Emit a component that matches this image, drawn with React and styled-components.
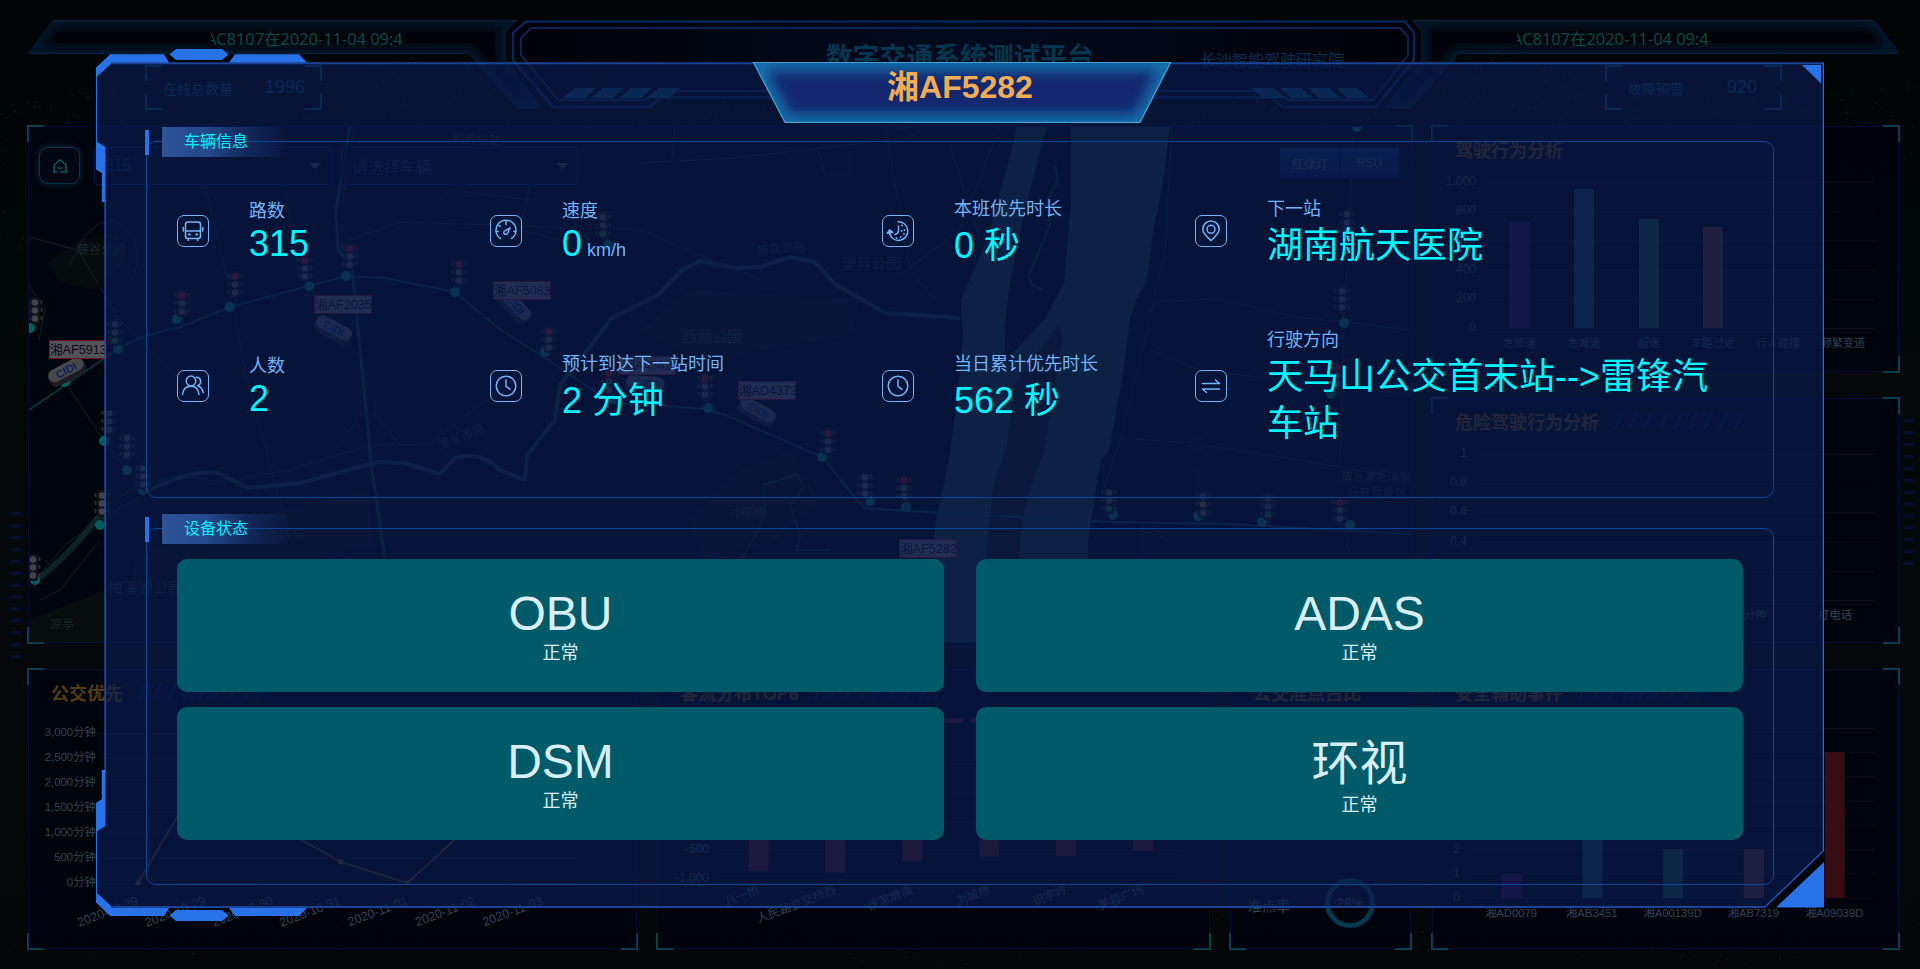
import React from "react";
import styled, { createGlobalStyle } from "styled-components";

const GlobalStyle = createGlobalStyle`
  * { box-sizing: border-box; }
  body {
    margin: 0;
    background: #020606;
    font-family: "Liberation Sans", "Noto Sans CJK SC", sans-serif;
  }
`;

const Screen = styled.div`
  position: relative;
  width: 1920px;
  height: 969px;
  overflow: hidden;
  background: linear-gradient(#010505 0%, #020707 30%, #05080a 62%, #040607 100%);
`;

const Backdrop = styled.svg`
  position: absolute;
  inset: 0;
`;

/* ---------- dashboard header ---------- */

const Header = styled.header`
  position: relative;
  height: 125px;
  display: grid;
  grid-template-columns: 505px 910px 505px;
`;

const HeaderArt = styled.svg`
  position: absolute;
  inset: 0;
`;

const HeaderSide = styled.div`
  position: relative;
  display: flex;
  flex-direction: column;
  padding: 28px 0 0 ${(p) => (p.$right ? 102 : 145)}px;
`;

const Ticker = styled.div`
  width: 192px;
  height: 24px;
  margin-left: ${(p) => (p.$right ? 0 : 66)}px;
  overflow: hidden;
  display: flex;
  font: 16.4px/22px "Noto Sans", "Noto Sans CJK SC", sans-serif;
  color: #06494a;
  white-space: nowrap;
  span { margin-left: -5px; }
`;

const HeaderCenter = styled.div`
  position: relative;
  height: 100px;
`;

const PlatformTitle = styled.h1`
  margin: 0;
  padding: 40px 0 0 321px;
  font-size: 26.8px;
  line-height: 36px;
  color: #04364f;
  white-space: nowrap;
`;

const Institute = styled.div`
  margin: -27px 0 0 695px;
  font-size: 16px;
  line-height: 24px;
  color: #05304c;
`;

const Counter = styled.div`
  width: 177px;
  height: 45px;
  margin: 13px 0 0 ${(p) => (p.$right ? 88 : 0)}px;
  padding: 0 17px 0 ${(p) => (p.$right ? 23 : 18)}px;
  display: flex;
  align-items: center;
  justify-content: space-between;
  color: #06455a;
  font-size: 14px;
  background:
    linear-gradient(#07455a, #07455a) 0 0 / 17px 2px,
    linear-gradient(#07455a, #07455a) 0 0 / 2px 16px,
    linear-gradient(#07455a, #07455a) 100% 0 / 17px 2px,
    linear-gradient(#07455a, #07455a) 100% 0 / 2px 16px,
    linear-gradient(#07455a, #07455a) 0 100% / 17px 2px,
    linear-gradient(#07455a, #07455a) 0 100% / 2px 16px,
    linear-gradient(#07455a, #07455a) 100% 100% / 17px 2px,
    linear-gradient(#07455a, #07455a) 100% 100% / 2px 16px,
    rgba(1, 3, 14, 0.5);
  background-repeat: no-repeat;
  b { font-weight: 400; font-size: 18px; margin-right: ${(p) => (p.$right ? 8 : 0)}px; }
`;

/* ---------- dashboard body ---------- */

const Body = styled.main`
  position: relative;
  padding: 0 20px 0 27px;
  display: grid;
  grid-template-columns: 1386px 469px;
  column-gap: 18px;
`;

const Column = styled.div`
  display: flex;
  flex-direction: column;
  gap: 24px;
`;

const BottomRow = styled.div`
  display: grid;
  grid-template-columns: 611px 555px 183px;
  gap: 18px;
`;

const corner = "linear-gradient(#06474a, #06474a)";

const Panel = styled.section`
  position: relative;
  height: ${(p) => p.$height}px;
  background:
    ${corner} 0 0 / 17px 2px, ${corner} 0 0 / 2px 17px,
    ${corner} 100% 0 / 17px 2px, ${corner} 100% 0 / 2px 17px,
    ${corner} 0 100% / 17px 2px, ${corner} 0 100% / 2px 17px,
    ${corner} 100% 100% / 17px 2px, ${corner} 100% 100% / 2px 17px,
    rgba(0, 4, 14, 0.85);
  background-repeat: no-repeat;
  overflow: hidden;
  &::after {
    content: "";
    position: absolute;
    inset: 1px;
    border: 1px solid rgba(5, 30, 110, 0.4);
  }
`;

const PanelTitle = styled.h2`
  height: 50px;
  margin: 0;
  padding: 0 0 3px 24px;
  display: flex;
  align-items: center;
  gap: ${(p) => p.$gap || 18}px;
  font-size: 18px;
  color: #573b12;
`;

const Slashes = styled.i`
  width: 128px;
  height: 17px;
  transform: skewX(-24deg);
  background: repeating-linear-gradient(90deg, #031238 0 3px, transparent 3px 15px);
`;

const Chart = styled.svg`
  display: block;
  font-size: ${(p) => p.$size || 12}px;
  fill: #304351;
`;

/* ---------- map ---------- */

const MapArea = styled.div`
  position: relative;
  margin: 2px;
  width: 1382px;
  height: 515px;
  overflow: hidden;
  background: #01050e;
`;

const MapArt = styled.svg`
  position: absolute;
  inset: 0;
`;

const Place = styled.span`
  position: absolute;
  left: ${(p) => p.$x - 29}px;
  top: ${(p) => p.$y - 127}px;
  transform: translateY(-50%) rotate(${(p) => p.$turn || 0}deg);
  font-size: ${(p) => p.$size || 12}px;
  color: #15282d;
  white-space: nowrap;
`;

const Plate = styled.span`
  position: absolute;
  left: ${(p) => p.$x - 29}px;
  top: ${(p) => p.$y - 127}px;
  width: 58px;
  height: 19px;
  border: 1px solid #6b0d1c;
  background: #55535a;
  color: #0c0c12;
  font-size: 12.6px;
  line-height: 18px;
  text-align: center;
  white-space: nowrap;
`;

const Toolbar = styled.div`
  position: relative;
  display: flex;
  align-items: flex-start;
  padding: 20px 0 0 10px;
`;

const HomeButton = styled.button`
  width: 41px;
  height: 37px;
  padding: 0;
  border: 1px solid #053450;
  border-radius: 9px;
  background: #010613;
  box-shadow: 0 0 6px #04283f;
  display: grid;
  place-items: center;
`;

const Select = styled.div`
  width: 237px;
  height: 38px;
  margin-left: ${(p) => p.$gap}px;
  padding: 0 9px 0 10px;
  border: 1px solid #04155a;
  border-radius: 3px;
  background: rgba(1, 5, 20, 0.8);
  display: flex;
  align-items: center;
  justify-content: space-between;
  font-size: 16px;
  color: ${(p) => (p.$empty ? "#1a2535" : "#0a2a58")};
  &::after {
    content: "";
    border: 6px solid transparent;
    border-top-color: #3a4048;
    margin-bottom: -6px;
  }
`;

const Toggles = styled.div`
  display: flex;
  margin: 1px 11px 0 auto;
`;

const Toggle = styled.button`
  width: 60px;
  height: 30px;
  padding: 0;
  border: 0;
  border-right: 1px solid #020b25;
  background: linear-gradient(#04295a, #051648);
  color: #3a5660;
  font: 12px "Liberation Sans", "Noto Sans CJK SC", sans-serif;
`;

/* ---------- vehicle dialog ---------- */

const Dialog = styled.div`
  position: absolute;
  left: 96px;
  top: 48px;
  width: 1729px;
  height: 874px;
  padding: 0 51px 0 50px;
`;

const Frame = styled.svg`
  position: absolute;
  inset: 0;
`;

const DialogTitle = styled.div`
  position: relative;
  height: 79px;
  padding: 19px 0 0;
  text-align: center;
  font-weight: 700;
  font-size: 32px;
  line-height: 40px;
  color: #eeac55;
`;

const Section = styled.section`
  position: relative;
  padding-top: 14px;
  & + & { margin-top: 16px; }
`;

const SectionTab = styled.div`
  position: absolute;
  z-index: 1;
  left: -1px;
  top: 0;
  height: 30px;
  display: flex;
  align-items: center;
  &::before {
    content: "";
    width: 4px;
    height: 25px;
    margin: 0 13px 0 0;
    background: #2a72e5;
  }
  h3 {
    width: 126px;
    height: 30px;
    margin: 0;
    padding-left: 22px;
    font-weight: 400;
    font-size: 16px;
    line-height: 29px;
    color: #00f3ff;
    background: linear-gradient(90deg, #2c5497 0%, #25498b 35%, rgba(25, 56, 120, 0.6) 65%, rgba(12, 30, 80, 0) 100%);
  }
`;

const Outline = styled.div`
  height: 357px;
  border: 1px solid #07479a;
  border-radius: 10px;
  padding: ${(p) => p.$pad};
`;

const Facts = styled.div`
  display: grid;
  grid-template-columns: 313px 392px 313px 548px;
  grid-auto-rows: 155px;
  align-items: center;
`;

const Fact = styled.div`
  display: flex;
  align-items: center;
`;

const FactIcon = styled.div`
  flex: none;
  width: 32px;
  height: 32px;
  margin-right: 40px;
  border: 1px solid #73b4f7;
  border-radius: 7px;
  display: grid;
  place-items: center;
  svg {
    width: 24px;
    height: 24px;
    fill: none;
    stroke: #73b4f7;
    stroke-width: 1.5;
    stroke-linecap: round;
    stroke-linejoin: round;
  }
`;

const FactText = styled.div`
  max-width: 470px;
  padding-top: ${(p) => (p.$tall ? 4 : 2)}px;
  color: #73b4f7;
  font-size: 18px;
  line-height: 24px;
`;

const FactValue = styled.div`
  padding-top: ${(p) => (p.$tall ? 1 : 0)}px;
  font-size: 36px;
  line-height: ${(p) => (p.$tall ? 47 : 41)}px;
  color: #00f6ff;
  white-space: ${(p) => (p.$wrap ? "normal" : "nowrap")};
  small { font-size: 18px; line-height: 1; margin-left: 5px; color: #73b4f7; }
`;

const Devices = styled.div`
  display: grid;
  grid-template-columns: 767px 767px;
  grid-auto-rows: 133px;
  gap: 15px 32px;
`;

const Device = styled.div`
  border-radius: 10px;
  background: #005a68;
  display: flex;
  flex-direction: column;
  align-items: center;
  justify-content: center;
  color: #d9eeff;
  font-size: 18px;
  line-height: 24px;
  strong {
    font-weight: 400;
    font-size: 48px;
    line-height: ${(p) => (p.$tall ? 63 : 55)}px;
    padding-top: ${(p) => (p.$tall ? 2 : 0)}px;
    margin-bottom: ${(p) => (p.$tall ? -2 : 0)}px;
  }
`;

/* ---------- drawings ---------- */

const particles = (() => {
  let seed = 7;
  const rnd = () => (seed = (seed * 16807) % 2147483647) / 2147483647;
  const out = [];
  for (let i = 0; i < 900; i++) {
    const x = Math.round(rnd() * 1920);
    const crest = 120 + 45 * Math.sin(x / 150 + 2.2) - (x > 1640 ? 20 : 0);
    out.push({ x, y: crest + Math.pow(rnd(), 2) * 150 - 50, o: 0.15 + rnd() * 0.4 });
  }
  for (let i = 0; i < 350; i++) {
    const x = Math.round(rnd() * 1920);
    out.push({ x, y: 900 + 20 * Math.sin(x / 120) + rnd() * 45, o: 0.1 + rnd() * 0.3 });
  }
  return out;
})();

function Background() {
  return (
    <Backdrop width="1920" height="969">
      {particles.map((p, i) => (
        <rect key={i} x={p.x} y={p.y} width="1.5" height="1.5" fill="#0a4a3c" opacity={p.o} />
      ))}
      {Array.from({ length: 13 }, (_, i) => (
        <g key={i} fill="#040d2c">
          <rect x="10" y={512 + i * 11.9} width="11" height="3.5" rx="1.5" />
          <rect x="1903" y={419 + i * 11.9} width="11" height="3.5" rx="1.5" />
        </g>
      ))}
    </Backdrop>
  );
}

const wingLeft = "M28.5 53.5 53 20.5H517L505 32V60L541 107.5H517L469 53.5Z";
const wingRight = "M1899 53.5 1874 20.5H1412L1422 32V60L1385 107.5H1411L1458 53.5Z";

function HeaderDrawing() {
  return (
    <HeaderArt width="1920" height="125">
      <defs>
        <filter id="soft" x="-5%" y="-50%" width="110%" height="200%"><feGaussianBlur stdDeviation="5" /></filter>
        <clipPath id="wingL"><path d={wingLeft} /></clipPath>
        <clipPath id="wingR"><path d={wingRight} /></clipPath>
        <linearGradient id="plate" x1="0" x2="1"><stop offset="0" stopColor="#010208" /><stop offset=".5" stopColor="#020a1d" /><stop offset="1" stopColor="#010208" /></linearGradient>
      </defs>
      <path d={wingLeft} fill="#01030a" />
      <path d={wingRight} fill="#01030a" />
      <g clipPath="url(#wingL)">
        <path d={wingLeft} fill="none" stroke="#041626" strokeWidth="14" filter="url(#soft)" />
      </g>
      <g clipPath="url(#wingR)">
        <path d={wingRight} fill="none" stroke="#041626" strokeWidth="14" filter="url(#soft)" />
      </g>
      <path d={wingLeft} fill="none" stroke="#061d44" />
      <path d={wingRight} fill="none" stroke="#061d44" />
      <path d="M526 21.500H1405L1414 33V60L1376 107H1283L1272 97.500H661L650 107H553L513 60V33Z" fill="url(#plate)" stroke="#0b2456" strokeWidth="2.500" />
      <path d="M531 28H1400L1408 37V55L1373 100H1288L1276 91H658L645 100H558L521 55V38Z" fill="none" stroke="#0b2456" strokeWidth="2" />
      <g fill="#084560">
        {[0, 1, 2, 3].map((i) => (
          <g key={i}>
            <path d={`M${563 + i * 28} 98l12-10h21l-11 10z`} />
            <path d={`M${1369 - i * 28} 98l-12-10h-21l11 10z`} />
          </g>
        ))}
      </g>
    </HeaderArt>
  );
}

const lights = [
  [182, 290, "r"], [235, 271, "r"], [305, 255, "r"], [350, 243, "r"], [459, 259, "r"], [603, 212, "g"],
  [35, 297, ""], [115, 319, "g"], [109, 408, ""], [127, 433, ""], [143, 463, ""], [102, 490, ""], [33, 554, ""],
  [549, 326, "r"], [609, 368, "r"], [705, 373, "r"], [828, 428, "r"], [865, 472, ""], [904, 475, "r"],
  [1109, 487, "g"], [1203, 491, "y"], [1268, 493, "g"], [1340, 497, "r"], [1347, 209, ""], [1342, 286, ""], [1337, 362, "r"],
];
const stops = [
  [177, 319], [230, 307], [309, 286], [346, 276], [455, 292], [545, 352], [708, 408], [822, 457], [870, 501], [906, 507],
  [1113, 515], [1198, 516], [1262, 522], [1350, 525], [1344, 323], [1331, 394], [1357, 127], [608, 245], [65, 382],
  [104, 441], [127, 470], [143, 490], [100, 525], [35, 580], [30, 328], [118, 349], [612, 399],
];
const buses = [[67, 372, -28], [514, 306, 48], [333, 330, 28], [757, 412, 28], [645, 385, 5]];

function Lamp({ x, y, state }) {
  const lamp = "#45414a";
  return (
    <g>
      <path d={`M${x + 1} ${y + 25}v9`} stroke="#33252a" strokeWidth="1" />
      <rect x={x - 5} y={y} width="10" height="27" rx="3" fill="#121215" />
      <path d={`M${x - 6.5} ${y + 3}v22M${x + 6.5} ${y + 3}v22`} stroke="#2e2a26" strokeWidth="2" strokeDasharray="4 4" />
      <circle cx={x} cy={y + 5.5} r="3.300" fill={state === "r" ? "#7e0f18" : lamp} />
      <circle cx={x} cy={y + 13.5} r="3.300" fill={state === "y" ? "#6b5a20" : lamp} />
      <circle cx={x} cy={y + 21.5} r="3.300" fill={state === "g" ? "#17602a" : lamp} />
    </g>
  );
}

function CityMap() {
  return (
    <MapArt width="1382" height="515" viewBox="29 127 1382 515">
      <g fill="#090e0e">
        <path d="M48 262 80 240 118 232 125 262 95 290 60 282Z" opacity=".6" />
        <path d="M640 330 690 290 860 300 850 335 700 360Z" opacity=".7" />
        <path d="M135 560 200 532 370 488 372 545 250 575 130 590Z" opacity=".8" />
        <path d="M690 520 740 470 790 450 820 500 770 545 700 559Z" opacity=".6" />
        <path d="M29 620 105 590V642H29Z" opacity=".8" />
      </g>
      <path fill="#142f33" d="M1017 126H1047L1042 145 1030 190 1017 245 1009 290 1004 330 1044 320 1064 283 1071 200V126H1170L1162 190 1155 220 1146 283 1136 300 1130 320 1122 380 1109 450 1101 460 1094 500 1088 540V643H923L933 559 935 525 949 460 957 400 963 335 961 300 971 277 987 240 1009 160Z" />
      <path d="M1047 126 1071 126V200L1064 283 1044 320 1004 363 1005 330 1009 290 1017 245 1030 190Z" fill="#01050e" />
      <path d="M1054 330 1060 326 1062 340 1044 453 1032 483 1023 517 1012 643H976L987 545 993 487 1007 445 1013 387Z" fill="#0a1218" />
      <g fill="none" stroke="#0b2228" strokeLinejoin="round">
        <path d="M150 490Q190 470 218 473L248 488 300 483 378 462 405 463 440 474 455 458Q480 450 500 470L525 480 527 455 555 420 560 385 595 340 612 318 640 304 658 295 682 270 700 261 735 268 760 267 790 257 815 262 835 284 885 313 960 318" stroke="#0f2c32" strokeWidth="4" />
        <path d="M107 505 140 485 180 475 220 482 290 470 370 445 430 444 486 400" />
        <path d="M58 160V150M29 285 45 310 39 340M29 237 78 250 120 320 200 400M70 265Q90 215 118 221 150 250 130 282M100 540 60 590 40 600M45 560l10 10" />
        <path d="M350 126 336 210 338 250 352 268 372 470 385 559" stroke="#0b2a33" strokeWidth="3" />
        <path d="M354 126 341 210 342 250M205 185 230 290 245 370 290 540M285 190 300 280M530 185 520 230 580 245" />
        <path d="M445 195 450 190 530 200M350 240 400 222 640 230 760 280M675 126 672 160M640 163 735 158 890 140M818 150 825 175H850V152M885 126 910 270 935 300M905 140Q940 120 895 130M950 145 980 240M1000 126 960 230 900 275" />
        <path d="M1055 165 1058 180 1048 200 1050 225 1029 275 1032 285 1043 290" stroke="#0f2c32" strokeWidth="2" />
        <path d="M1172 126 1165 250 1145 340 1120 440 1100 500M1145 315 1158 301 1220 299 1290 316 1410 330M1354 128 1344 325 1340 460M1150 350 1200 370 1411 395M1120 438 1190 443 1300 460 1411 480M1198 470V512M1142 525V559M1140 530 1168 540M1340 500 1350 559" />
        <circle cx="1197" cy="444" r="6" />
        <path d="M742 558 758 530 765 515 764 485 797 474 804 488 790 505 800 535 797 550 830 550" stroke="#0f2c32" strokeWidth="1.500" />
        <path d="M340 445 360 415H375L400 445M375 400V415" />
      </g>
      <g fill="none" stroke="#07333c" strokeWidth="2">
        <path d="M29 410 118 349Q140 335 178 328L230 307 309 286 346 276 384 278 455 292 498 328 545 358 612 403 665 406 706 409 730 417 822 457 864 508 940 513 1109 522 1230 524 1411 534" />
        <path d="M65 382 104 441 143 490" stroke="#072329" strokeWidth="1" />
        <path d="M29 587 65 545 100 520 150 490" stroke="#072329" strokeWidth="1" />
      </g>
      <path d="M36 580Q65 560 100 515" fill="none" stroke="#0c2426" strokeWidth="6" />
      {stops.map(([x, y], i) => <circle key={i} cx={x} cy={y} r="5" fill="#04605f" />)}
      {lights.map(([x, y, s], i) => <Lamp key={i} x={x} y={y} state={s} />)}
      {buses.map(([x, y, r], i) => (
        <g key={i} transform={`translate(${x} ${y}) rotate(${r})`}>
          <rect x="-20" y="-8" width="40" height="17" rx="7" fill="#1d1d20" />
          <rect x="-19" y="-9" width="38" height="13" rx="6" fill="#48484a" />
          <text x="0" y="2" fontSize="11" fontWeight="700" textAnchor="middle" fill="#0a2560">CIDI</text>
        </g>
      ))}
    </MapArt>
  );
}

const grid = "rgba(60,90,110,0.16)";

function BehaviourChart() {
  const bars = [["急加速", 1519.5, 222, "#2e0f46"], ["急减速", 1584, 189, "#113844"], ["超速", 1649, 219, "#123f38"], ["车距过近", 1713, 227, "#4a281d"], ["行人碰撞", 1778, 328], ["频繁变道", 1843, 328]];
  return (
    <Chart width="469" height="198" viewBox="1431 175 469 198" $size={12}>
      {["1,000", "800", "600", "400", "200", "0"].map((t, i) => (
        <g key={t}>
          <path d={`M1488 ${182.5 + i * 29.2}H1875`} stroke={grid} />
          <text x="1476" y={185 + i * 29.2} textAnchor="end">{t}</text>
        </g>
      ))}
      {bars.map(([t, x, y, c]) => (
        <g key={t}>
          {c && <rect x={x - 10} y={y} width="20" height={328 - y} fill={c} />}
          <text x={x} y="347" fontSize="11" textAnchor="middle">{t}</text>
        </g>
      ))}
    </Chart>
  );
}

function DangerChart() {
  return (
    <Chart width="469" height="197" viewBox="1431 447 469 197" $size={12}>
      {["1", "0.8", "0.6", "0.4", "0.2", "0"].map((t, i) => (
        <g key={t}>
          <path d={`M1479 ${454.5 + i * 29.2}H1875`} stroke={grid} />
          <text x="1467" y={457 + i * 29.2} textAnchor="end">{t}</text>
        </g>
      ))}
      <text x="1755" y="619" fontSize="11.500" textAnchor="middle">分神</text>
      <text x="1835" y="619" fontSize="11.500" textAnchor="middle">打电话</text>
    </Chart>
  );
}

function PriorityChart() {
  const points = [[138, 883], [205, 770], [273, 824], [341, 862], [407.5, 883], [475, 821], [542, 790]];
  const dates = ["2020-10-29", "2020-10-29", "2020-10-30", "2020-10-31", "2020-11-01", "2020-11-02", "2020-11-03"];
  return (
    <Chart width="611" height="232" viewBox="27 718 611 232" $size={11.4}>
      {["3,000", "2,500", "2,000", "1,500", "1,000", "500", "0"].map((t, i) => (
        <g key={t}>
          <path d={`M100 ${733.5 + i * 25}H578`} stroke={grid} />
          <text x="96" y={735.5 + i * 25} textAnchor="end">{t}分钟</text>
        </g>
      ))}
      <polyline points={points.map((p) => p.join(",")).join(" ")} fill="none" stroke="#513619" strokeWidth="1.800" />
      {points.map(([x, y], i) => <circle key={i} cx={x} cy={y} r="2.500" fill="#574533" />)}
      {dates.map((t, i) => (
        <text key={i} transform={`translate(${139 + i * 67.4} 904) rotate(-21)`} fontSize="12.500" textAnchor="end">{t}</text>
      ))}
    </Chart>
  );
}

function FlowChart() {
  const bars = [["八一桥", 871], ["人民路立交桥西", 872.5], ["侯家塘南", 861], ["浏城桥", 856.5], ["识字岭", 856], ["芙蓉广场", 851]];
  return (
    <Chart width="555" height="232" viewBox="656 718 555 232">
      {["1,000", "500", "0", "-500", "-1,000"].map((t, i) => (
        <g key={t}>
          <path d={`M720 ${764.5 + i * 28.7}H1182`} stroke={grid} />
          <text x="709" y={767 + i * 28.7} textAnchor="end">{t}</text>
        </g>
      ))}
      <path d="M944 718h20v2q0 3 -4 3h-16zM971 718h10v5h-10z" fill="#49131d" />
      {bars.map(([t, y], i) => (
        <g key={t}>
          <rect x={748.5 + i * 76.9} y="790" width="20" height={y - 790} fill="#49131d" />
          <text transform={`translate(${760 + i * 77} 893) rotate(-21)`} textAnchor="end">{t}</text>
        </g>
      ))}
    </Chart>
  );
}

function PunctualChart() {
  return (
    <Chart width="183" height="232" viewBox="1229 718 183 232" $size={14}>
      <text x="1248" y="911">准点率</text>
      <circle cx="1350" cy="903" r="22.500" fill="none" stroke="#043a4c" strokeWidth="5" />
      <text x="1350" y="908" fontWeight="700" textAnchor="middle" fill="#2c3050">28%</text>
    </Chart>
  );
}

function AssistChart() {
  const bars = [["湘AD0079", 874, "#2e0f46"], ["湘AB3451", 801, "#113844"], ["湘A00139D", 849, "#123f38"], ["湘AB7319", 849, "#4a281d"], ["湘A09039D", 752, "#370d14"]];
  return (
    <Chart width="469" height="232" viewBox="1431 718 469 232">
      {[7, 6, 5, 4, 3, 2, 1, 0].map((t, i) => (
        <g key={t}>
          <path d={`M1471 ${728.5 + i * 24.2}H1875`} stroke={grid} />
          <text x="1460" y={731.5 + i * 24.2} textAnchor="end">{t}</text>
        </g>
      ))}
      {bars.map(([t, y, c], i) => (
        <g key={t}>
          <rect x={1501.5 + i * 80.8} y={y} width="20" height={898 - y} fill={c} />
          <text x={1511 + i * 80.8} y="917" fontSize="11.300" textAnchor="middle">{t}</text>
        </g>
      ))}
    </Chart>
  );
}

function DialogFrame() {
  return (
    <Frame width="1729" height="874" viewBox="96 48 1729 874">
      <defs>
        <clipPath id="cap"><path d="M753 62.500H1171L1140 122.500H785Z" /></clipPath>
        <filter id="capGlow" x="-10%" y="-40%" width="120%" height="180%"><feGaussianBlur stdDeviation="6.500" /></filter>
      </defs>
      <path d="M110 63H1823.500V851L1765 907H110L96 893V832L105 826V147L96 141V77Z" fill="rgba(10,27,77,0.69)" />
      <path d="M110 63.300H1824" stroke="#1a4596" strokeWidth="2" />
      <path d="M110 906.900H1765" stroke="#1a4596" strokeWidth="2" />
      <path d="M105.200 200V772" stroke="#1d4da6" strokeWidth="1.800" />
      <path d="M96.600 76V142M96.600 831V893M1823.400 63V851" stroke="#276fe6" strokeWidth="1.200" />
      <path d="M1823.500 850.700 1765 907" stroke="#1d55b8" strokeWidth="1.400" />
      <g fill="#2873e7">
        <path d="M96 67.500 110 54.500 111 64 96 77.500Z" />
        <path d="M110 54.300H164L169 62.500H110Z" />
        <path d="M169.500 54.500 176 49H222L228.500 54.500 222 60H176Z" />
        <path d="M229 62.500 235 54.300H299L307 62.500Z" />
        <path d="M96 141 105.500 147V202H101.800V173L96 169.500Z" />
        <path d="M96 832 105.500 826V770H101.800V799L96 803Z" />
        <path d="M96 892 111 906 110 916 96 902.500Z" />
        <path d="M110 908H169L164 916H110Z" />
        <path d="M169.500 915.500 176 910H222L228.500 915.500 222 921H176Z" />
        <path d="M229 908H307L299 916H235Z" />
        <path d="M1802 65H1821V83.500Z" />
        <path d="M1824 862V907.500H1776Z" />
      </g>
      <path d="M753 62.500H1171L1140 122.500H785Z" fill="#14286f" />
      <g clipPath="url(#cap)">
        <path d="M753 62.500H1171L1140 122.500H785Z" fill="none" stroke="#1573b0" strokeWidth="15" filter="url(#capGlow)" />
      </g>
      <path d="M753.500 62.500H1170.500L1140 122.300H785Z" fill="none" stroke="#3aa5d2" strokeWidth="1.200" />
    </Frame>
  );
}

const icons = {
  bus: <><rect x="4.500" y="3" width="15" height="16.500" rx="2.500" /><path d="M4.500 12h15M2.300 8.500v3.500M21.700 8.500v3.500M7.300 20v1.500M16.700 20v1.500" /><path d="M7.800 15.500h1M15.200 15.500h1" strokeWidth="2" /></>,
  gauge: <><path d="M6.500 19.500A10 10 0 1 1 17.500 19.500" /><path d="M12 2.500v3M4.700 6.200l1.400 1.200M2.200 12.500h2M19.800 12.500h2" /><path d="M16 8.800 11.300 11.600a2 2 0 1 0 2.500 2.200Z" /></>,
  history: <><path d="M12 2.800A9.300 9.300 0 1 1 3.400 14" /><path d="M1.300 14.200 3.500 10.800 6.800 13.400Z" fill="#73b4f7" /><path d="M12.500 7v4.500q0 3-3.500 4" /><path d="M16 6.500v.1M18.500 11v.1M18 15v.1M14.800 18v.1M10.500 19v.1M15.500 12v.1" strokeWidth="1.800" /></>,
  pin: <><path d="M12 21.500C8 18 3.800 14.500 3.800 10.200a8.200 8.200 0 0 1 16.400 0C20.200 14.500 16 18 12 21.500Z" /><circle cx="12" cy="10.300" r="4" /></>,
  people: <><ellipse cx="10" cy="7" rx="4.800" ry="5" /><path d="M1.500 20.500C2 15 5.500 12.300 10 12.300s7.500 2.700 8 8.200" /><path d="M15.500 3.200c5 .2 5.500 6.800 1.200 8.500 3.200 1 5 3.500 5.500 7" /></>,
  clock: <><circle cx="12" cy="12" r="9.800" /><path d="M12 6v6.300l4 3" /></>,
  swap: <><path d="M3.500 9.500H20.500L16.500 6M20.500 15H3.500L7.500 18.500" /></>,
};

const facts = [
  { icon: "bus", label: "路数", value: "315" },
  { icon: "gauge", label: "速度", value: "0", unit: "km/h" },
  { icon: "history", label: "本班优先时长", value: "0 秒", tall: true },
  { icon: "pin", label: "下一站", value: "湖南航天医院", tall: true },
  { icon: "people", label: "人数", value: "2" },
  { icon: "clock", label: "预计到达下一站时间", value: "2 分钟", tall: true },
  { icon: "clock", label: "当日累计优先时长", value: "562 秒", tall: true },
  { icon: "swap", label: "行驶方向", value: "天马山公交首末站-->雷锋汽车站", tall: true, wrap: true },
];

const devices = [["OBU"], ["ADAS"], ["DSM"], ["环视", true]];

function VehicleDialog() {
  return (
    <Dialog>
      <DialogFrame />
      <DialogTitle>湘AF5282</DialogTitle>
      <Section>
        <SectionTab><h3>车辆信息</h3></SectionTab>
        <Outline $pad="11px 30px">
          <Facts>
            {facts.map((f) => (
              <Fact key={f.label}>
                <FactIcon><svg viewBox="0 0 24 24">{icons[f.icon]}</svg></FactIcon>
                <FactText $tall={f.tall}>
                  {f.label}
                  <FactValue $tall={f.tall} $wrap={f.wrap}>{f.value}{f.unit && <small>{f.unit}</small>}</FactValue>
                </FactText>
              </Fact>
            ))}
          </Facts>
        </Outline>
      </Section>
      <Section>
        <SectionTab><h3>设备状态</h3></SectionTab>
        <Outline $pad="30px">
          <Devices>
            {devices.map(([name, tall]) => (
              <Device key={name} $tall={tall}><strong>{name}</strong>正常</Device>
            ))}
          </Devices>
        </Outline>
      </Section>
    </Dialog>
  );
}

export default function App() {
  return (
    <Screen>
      <GlobalStyle />
      <Background />
      <Header>
        <HeaderDrawing />
        <HeaderSide>
          <Ticker><span>AC8107在2020-11-04 09:43</span></Ticker>
          <Counter>在线总数量<b>1996</b></Counter>
        </HeaderSide>
        <HeaderCenter>
          <PlatformTitle>数字交通系统测试平台</PlatformTitle>
          <Institute>长沙智能驾驶研究院</Institute>
        </HeaderCenter>
        <HeaderSide $right>
          <Ticker $right><span>AC8107在2020-11-04 09:43</span></Ticker>
          <Counter $right>故障预警<b>920</b></Counter>
        </HeaderSide>
      </Header>
      <Body>
        <Column>
          <Panel $height={519}>
            <MapArea>
              <CityMap />
              <Place $x={77} $y={248}>麓谷公园</Place>
              <Place $x={453} $y={138} $turn={5}>桐梓坡路</Place>
              <Place $x={757} $y={247} $turn={-5}>咸嘉湖路</Place>
              <Place $x={841} $y={262} $size={15}>望月公园</Place>
              <Place $x={682} $y={335} $size={15}>西湖公园</Place>
              <Place $x={437} $y={435} $turn={-20}>金星南路</Place>
              <Place $x={729} $y={511}>北极峰</Place>
              <Place $x={268} $y={532}>节庆岛</Place>
              <Place $x={108} $y={586} $size={15}>梅溪湖公园</Place>
              <Place $x={50} $y={623}>凉亭</Place>
              <Place $x={1341} $y={476} $size={11.6}>清水塘毛泽东</Place>
              <Place $x={1348} $y={492} $size={11.6}>杨开慧故居</Place>
              <Plate $x={314} $y={295}>湘AF2035</Plate>
              <Plate $x={493} $y={281}>湘AF5083</Plate>
              <Plate $x={49} $y={340}>湘AF5913</Plate>
              <Plate $x={618} $y={356}>湘A4382</Plate>
              <Plate $x={738} $y={381}>湘AD4373</Plate>
              <Plate $x={899} $y={539}>湘AF5282</Plate>
              <Toolbar>
                <HomeButton>
                  <svg width="16" height="16" viewBox="0 0 16 16" fill="none" stroke="#065c5e" strokeWidth="1.600">
                    <path d="M5 14H2V7L8 2l6 5v7H8M5.500 10h5" />
                  </svg>
                </HomeButton>
                <Select $gap={14}>315</Select>
                <Select $gap={10} $empty>请选择车辆</Select>
                <Toggles><Toggle>红绿灯</Toggle><Toggle>RSU</Toggle></Toggles>
              </Toolbar>
            </MapArea>
          </Panel>
          <BottomRow>
            <Panel $height={282}><PanelTitle>公交优先<Slashes /></PanelTitle><PriorityChart /></Panel>
            <Panel $height={282}><PanelTitle>客流分布TOP6<Slashes /></PanelTitle><FlowChart /></Panel>
            <Panel $height={282}><PanelTitle>公交准点占比</PanelTitle><PunctualChart /></Panel>
          </BottomRow>
        </Column>
        <Column>
          <Panel $height={248}><PanelTitle>驾驶行为分析</PanelTitle><BehaviourChart /></Panel>
          <Panel $height={247}><PanelTitle>危险驾驶行为分析<Slashes /></PanelTitle><DangerChart /></Panel>
          <Panel $height={282}><PanelTitle>安全辅助事件<Slashes /></PanelTitle><AssistChart /></Panel>
        </Column>
      </Body>
      <VehicleDialog />
    </Screen>
  );
}
